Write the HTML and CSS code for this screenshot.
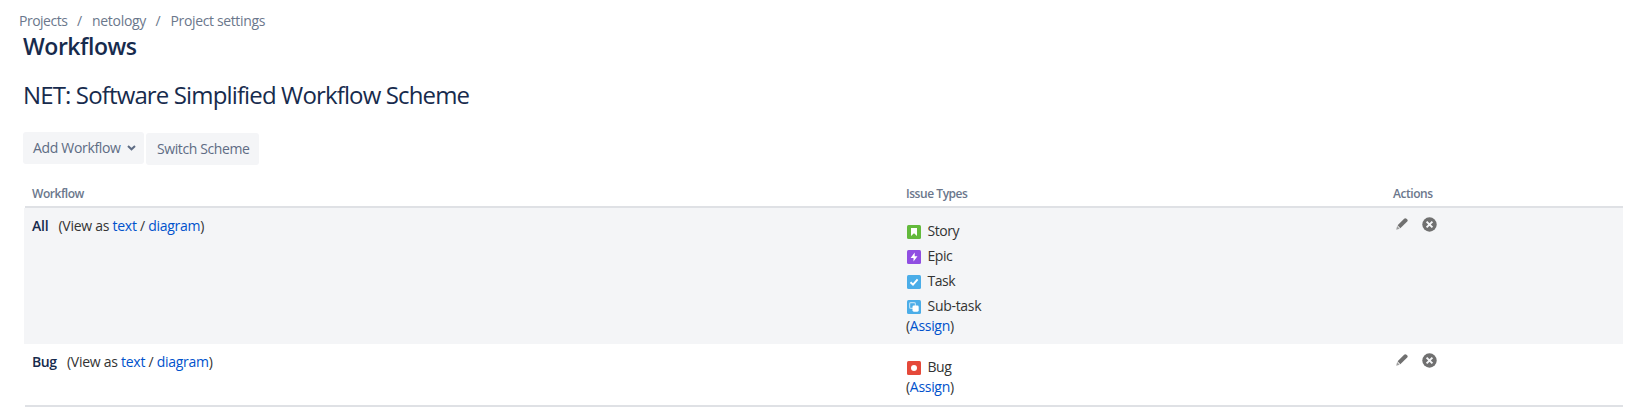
FILE: index.html
```html
<!DOCTYPE html>
<html lang="en">
<head>
<meta charset="utf-8">
<title>Workflows</title>
<link rel="stylesheet" href="styles.css">
</head>
<body>
<svg class="defs" width="0" height="0" aria-hidden="true">
  <symbol id="pencil" viewBox="0 0 12 12"><path d="M8.100.8Q9.300-.2 10.500.7L11.300 1.500Q12.100 2.600 11.200 3.500L4.300 10.200 1.600 7.300Z"/><path d="M1.100 8 3.700 10.700.2 11.700Z" opacity=".65"/></symbol>
  <symbol id="remove" viewBox="0 0 15 15"><circle cx="7.500" cy="7.500" r="7.200"/><path d="M4.600 4.600l5.800 5.800M10.400 4.600l-5.800 5.800" stroke="#f4f5f7" stroke-width="2"/></symbol>
</svg>
<nav class="crumbs"><a>Projects</a><span>/</span><a>netology</a><span>/</span><a class="last">Project settings</a></nav>
<main>
  <h1>Workflows</h1>
  <h2>NET: Software Simplified Workflow Scheme</h2>
  <div class="toolbar">
    <button class="btn add">Add Workflow<svg width="9" height="6" viewBox="0 0 9 6"><path d="M1 1l3.500 3.300L8 1" fill="none" stroke="#5e6c84" stroke-width="2"/></svg></button>
    <button class="btn switch">Switch Scheme</button>
  </div>
  <section class="table">
    <div class="row head"><div>Workflow</div><div>Issue Types</div><div>Actions</div></div>
    <div class="row shaded">
      <div class="flow"><strong class="all">All</strong><span class="view">(View as <a>text</a> / <a>diagram</a>)</span></div>
      <div class="types">
        <div class="type"><svg class="ic" viewBox="0 0 14 14"><rect width="14" height="14" rx="1.500" fill="#63ba3c"/><path d="M4 3h6v8L7 8.300 4 11z" fill="#fff"/></svg><span>Story</span></div>
        <div class="type"><svg class="ic" viewBox="0 0 14 14"><rect width="14" height="14" rx="1.500" fill="#904ee2"/><path d="M7.700 2.600 3.600 7.900H6.500V11.500L10.500 6.200H7.700z" fill="#fff"/></svg><span>Epic</span></div>
        <div class="type"><svg class="ic" viewBox="0 0 14 14"><rect width="14" height="14" rx="1.500" fill="#4bade8"/><path d="M3.500 7.300 6 9.700 10.600 4.300" fill="none" stroke="#fff" stroke-width="1.900"/></svg><span>Task</span></div>
        <div class="type"><svg class="ic" viewBox="0 0 14 14"><rect width="14" height="14" rx="1.500" fill="#4bade8"/><rect x="2.600" y="2.600" width="5.800" height="5.800" rx="1.200" fill="none" stroke="#b7def6" stroke-width="1.200"/><rect x="5.500" y="5.500" width="6.200" height="6.200" rx="1.400" fill="#fff"/></svg><span class="sub">Sub-task</span></div>
        <div class="assign">(<a>Assign</a>)</div>
      </div>
      <div class="actions"><svg class="pencil"><use href="#pencil"/></svg><svg class="remove"><use href="#remove"/></svg></div>
    </div>
    <div class="row plain">
      <div class="flow"><strong class="bugname">Bug</strong><span class="view">(View as <a>text</a> / <a>diagram</a>)</span></div>
      <div class="types">
        <div class="type"><svg class="ic" viewBox="0 0 14 14"><rect width="14" height="14" rx="1.500" fill="#e5493a"/><circle cx="7" cy="7" r="3" fill="#fff"/></svg><span>Bug</span></div>
        <div class="assign">(<a>Assign</a>)</div>
      </div>
      <div class="actions"><svg class="pencil"><use href="#pencil"/></svg><svg class="remove"><use href="#remove"/></svg></div>
    </div>
  </section>
</main>
</body>
</html>
```
FILE: styles.css
```css
* { box-sizing: border-box; }
body { margin: 0; background: #fff; color: #333; font: 14px/20px "Open Sans", "Noto Sans", sans-serif; white-space: nowrap; letter-spacing: -.45px; }
.defs { display: block; }
.crumbs { display: flex; height: 36px; padding: 11px 0 0 19px; color: #6b778c; }
.crumbs a:first-child { width: 58px; letter-spacing: -.5px; }
.crumbs span { width: 15px; }
.crumbs a:nth-child(3) { width: 63.5px; letter-spacing: -.3px; }
.crumbs .last { letter-spacing: -.36px; }
main { padding: 0 5px 0 23px; }
h1 { margin: 0; height: 45px; font-size: 23px; line-height: 21px; font-weight: 600; color: #172b4d; letter-spacing: -.45px; }
h2 { margin: 0; height: 51px; font-size: 24px; line-height: 28px; font-weight: 400; color: #172b4d; letter-spacing: -.86px; }
.toolbar { display: flex; gap: 2px; height: 50px; }
.btn { height: 32px; border: 0; border-radius: 3px; background: #f4f5f7; color: #5e6c84; font: inherit; letter-spacing: -.4px; padding: 0 0 0 10px; text-align: left; }
.add { width: 121px; display: flex; align-items: center; letter-spacing: -.33px; }
.add svg { margin-left: 6px; }
.switch { width: 113px; margin-top: 1px; padding-left: 11px; }
.table { margin-left: 1px; }
.row { display: grid; grid-template-columns: 874px 487px 1fr; padding-left: 8px; }
.head { height: 26px; margin-left: 1px; padding-left: 7px; border-bottom: 2px solid #dfe1e5; font-size: 12px; font-weight: 600; line-height: 24px; color: #6b778c; letter-spacing: -.45px; }
.shaded { height: 136px; background: #f4f5f7; }
.plain { height: 63px; margin-left: 1px; padding-left: 7px; border-bottom: 2px solid #dfe1e5; }
.flow { display: flex; padding-top: 8px; }
.flow strong { color: #172b4d; font-weight: 600; }
.all { width: 26.5px; letter-spacing: -.2px; }
.bugname { width: 35px; }
a { color: inherit; }
.view { letter-spacing: -.27px; }
.view a, .assign a { color: #0052cc; }
.types { padding-top: 11px; }
.type { display: flex; align-items: center; height: 25px; gap: 6.500px; padding-left: 1px; }
.type span { padding-bottom: 1px; }
.type .sub { letter-spacing: -.3px; }
.ic { width: 14px; height: 14px; }
.assign { line-height: 20px; margin-top: -3px; letter-spacing: -.3px; }
.actions { display: flex; align-items: flex-start; padding: 9px 0 0 3px; fill: #707070; }
.pencil { width: 12px; height: 12px; margin-top: 1px; }
.remove { width: 15px; height: 15px; margin-left: 14px; margin-top: -.5px; }
```
